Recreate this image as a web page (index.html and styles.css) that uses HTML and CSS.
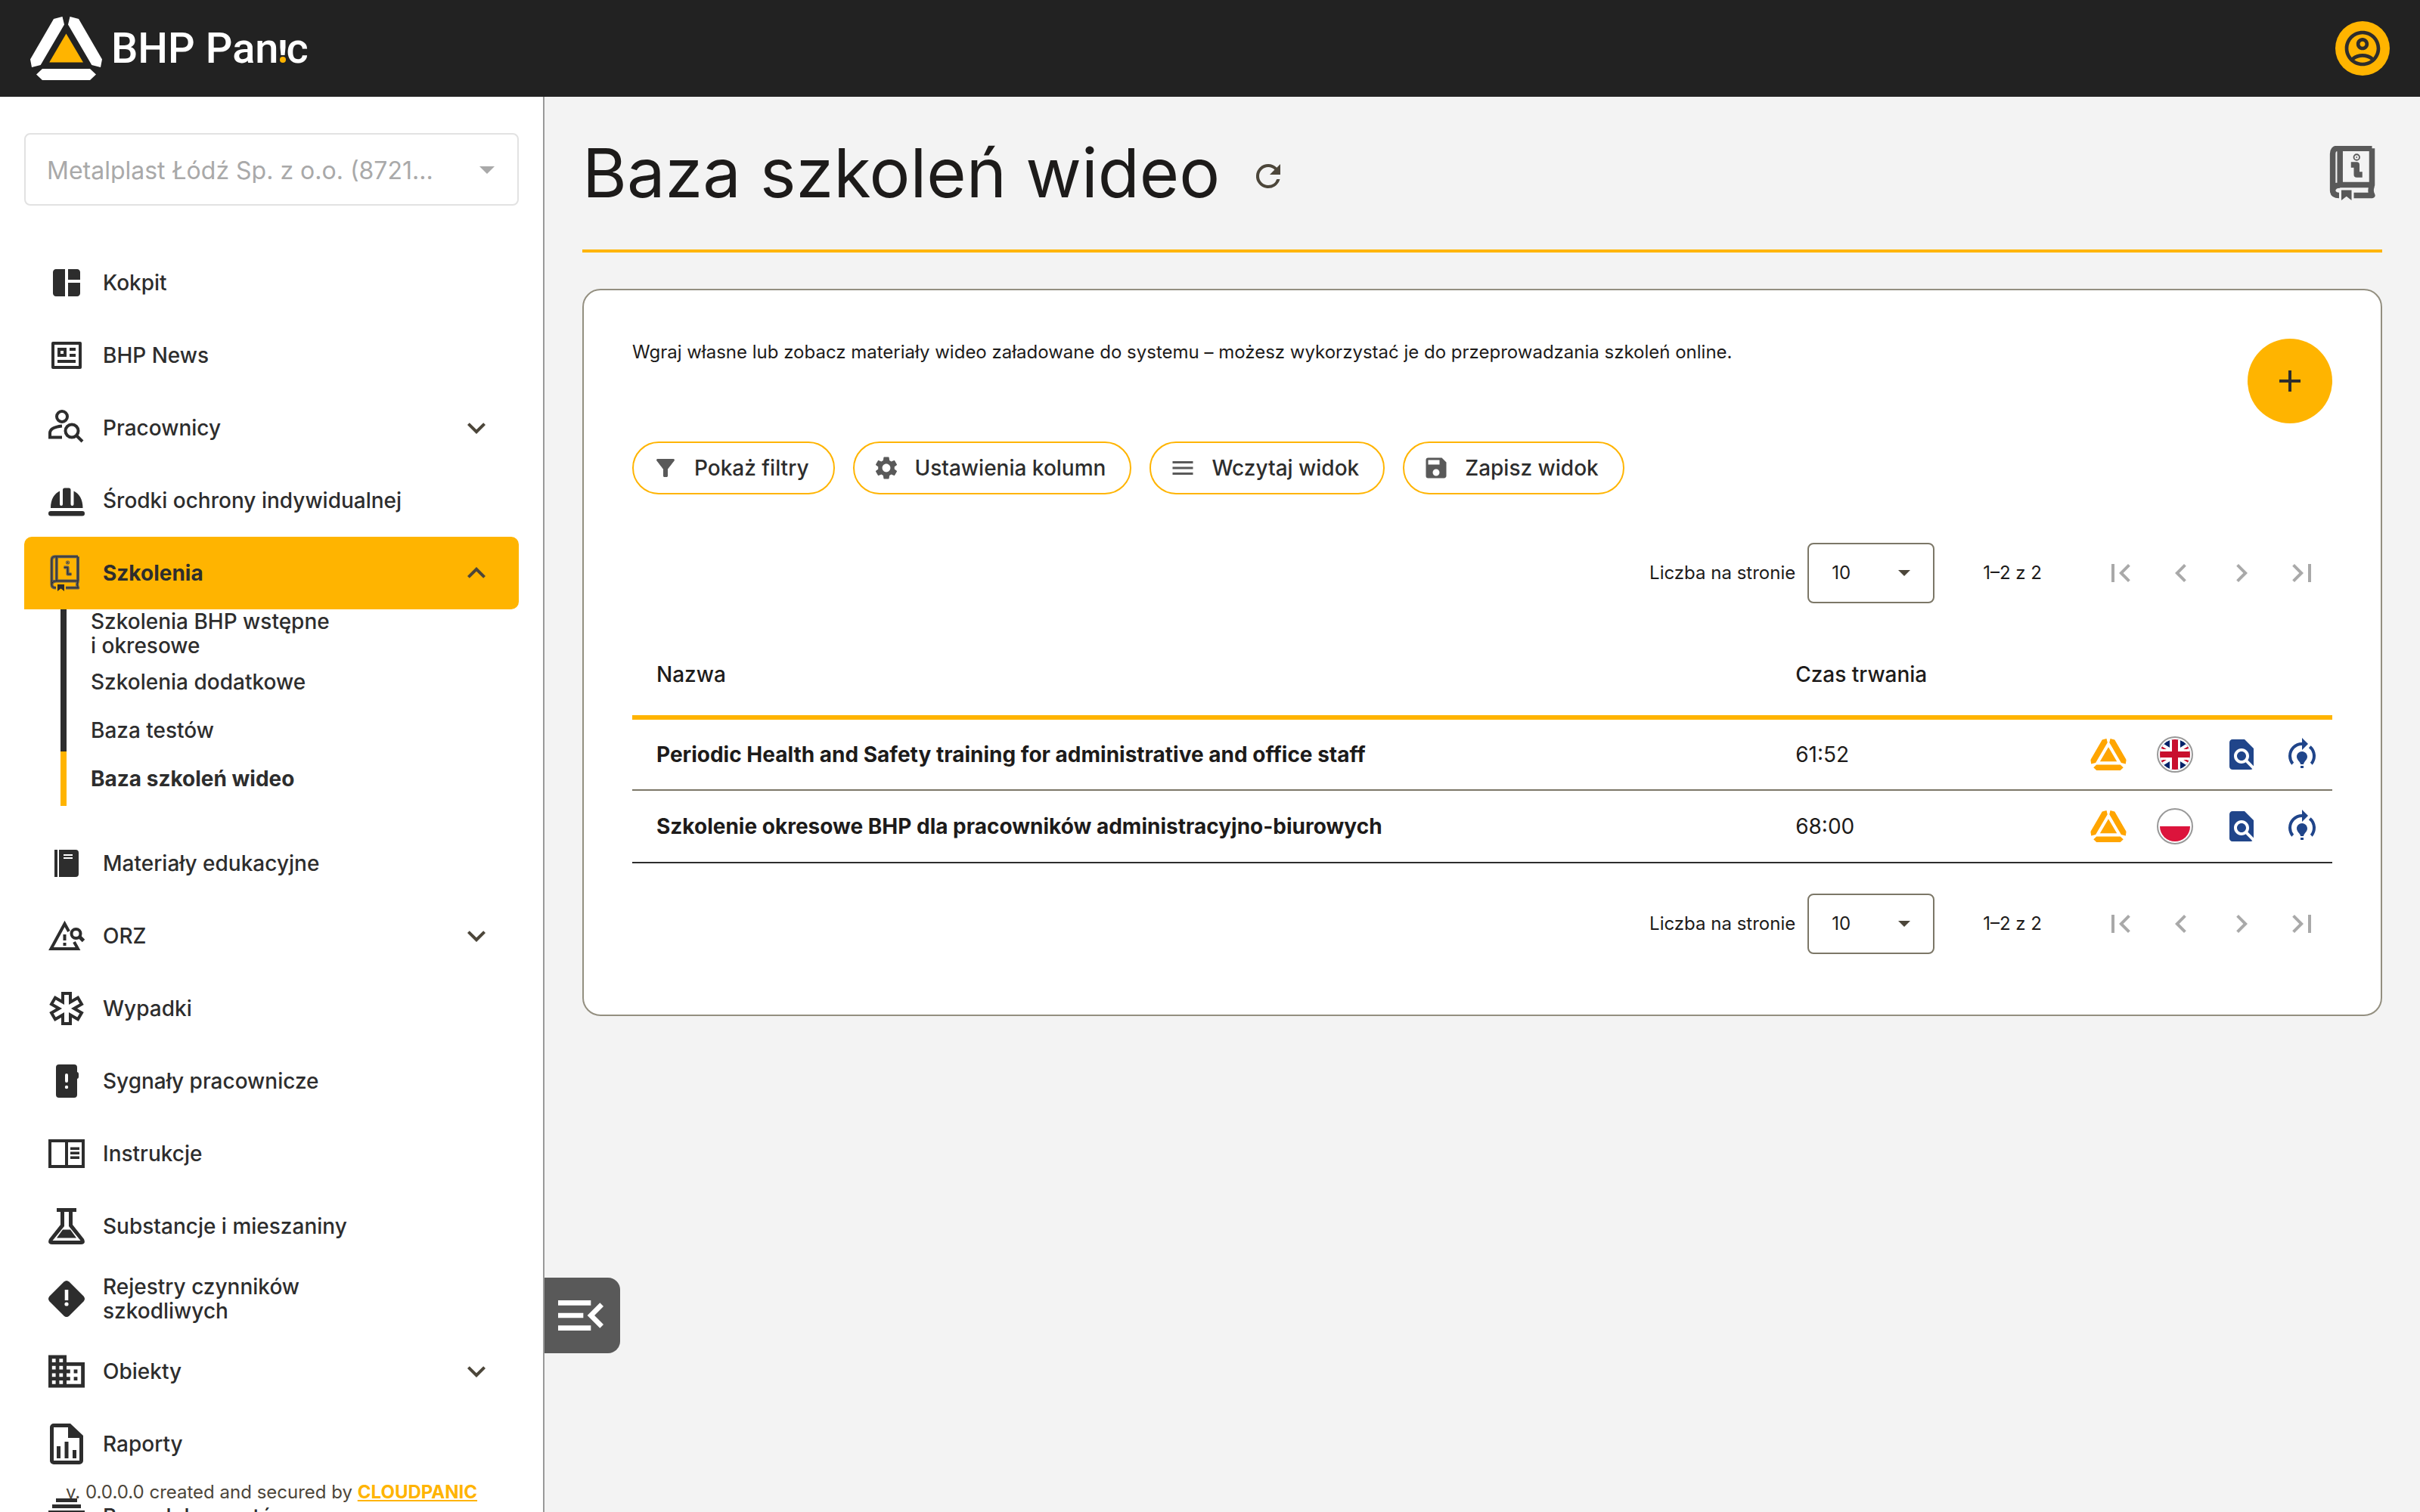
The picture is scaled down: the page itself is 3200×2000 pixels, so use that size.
FILE: index.html
```html
<!DOCTYPE html>
<html lang="pl">
<head>
<meta charset="utf-8">
<title>Baza szkoleń wideo</title>
<link rel="stylesheet" href="styles.css">
</head>
<body>
<!-- shared shapes -->
<svg class="sprite" aria-hidden="true">
  <symbol id="mark" viewBox="0 0 95 84">
    <path d="M31 3 42.500 0 45 10.600 13.700 64 2 67 0 56.600zM64 3 52.500 0 50 10.600 81.300 64 93 67 95 56.600zM8 76.500 16 69H79L87 76.500 79 84H16z"/>
  </symbol>
  <symbol id="mark-core" viewBox="0 0 95 84">
    <path d="M47.500 22.600 25.200 60.600H70z"/>
  </symbol>
  <symbol id="more" viewBox="0 0 24 24"><path d="M16.590 8.590 12 13.170 7.410 8.590 6 10l6 6 6-6z"/></symbol>
  <symbol id="less" viewBox="0 0 24 24"><path d="m12 8-6 6 1.410 1.410L12 10.830l4.590 4.580L18 14z"/></symbol>
  <symbol id="page-first" viewBox="0 0 24 24"><path d="M18.410 16.590 13.820 12l4.590-4.590L17 6l-6 6 6 6zM6 6h2v12H6z"/></symbol>
  <symbol id="page-prev" viewBox="0 0 24 24"><path d="M15.410 7.410 14 6l-6 6 6 6 1.410-1.410L10.830 12z"/></symbol>
  <symbol id="page-next" viewBox="0 0 24 24"><path d="M10 6 8.590 7.410 13.170 12l-4.580 4.590L10 18l6-6z"/></symbol>
  <symbol id="page-last" viewBox="0 0 24 24"><path d="M5.590 7.410 10.180 12l-4.590 4.590L7 18l6-6-6-6zM16 6h2v12h-2z"/></symbol>
  <symbol id="preview" viewBox="0 0 24 24"><path d="M20 19.590V8l-6-6H6c-1.100 0-1.990.9-1.990 2L4 20c0 1.100.89 2 1.990 2H18c.45 0 .85-.15 1.190-.4l-4.430-4.430c-.8.52-1.740.83-2.760.83-2.760 0-5-2.240-5-5s2.240-5 5-5 5 2.240 5 5c0 1.020-.31 1.960-.83 2.750L20 19.590zM9 13c0 1.660 1.340 3 3 3s3-1.340 3-3-1.340-3-3-3-3 1.340-3 3z"/></symbol>
  <symbol id="training" viewBox="0 0 24 24"><path d="M15.500 13.500c0 2-2.500 3.500-2.500 5h-2c0-1.500-2.500-3-2.500-5 0-1.930 1.570-3.500 3.500-3.500s3.500 1.570 3.500 3.500zm-2.500 6h-2V21h2v-1.500zM19 13c0 1.680-.59 3.210-1.580 4.420l1.420 1.420a8.978 8.978 0 0 0-1-12.680l-1.420 1.420A6.993 6.993 0 0 1 19 13zm-3-8-4-4v3a9 9 0 0 0-9 9c0 2.230.82 4.270 2.160 5.840l1.420-1.420A6.938 6.938 0 0 1 5 13c0-3.860 3.140-7 7-7v3l4-4z"/></symbol>
  <symbol id="book" viewBox="0 0 48 48">
    <path fill="none" stroke-linejoin="round" d="M39 2.200H8.500Q4.400 2.200 4.400 7V39Q4.400 43.600 10 43.600M10.800 2.200V34.400H39V2.200M4.400 39Q5 34.600 10.800 34.600M39 35Q37 39 39.200 43.600H23M20.500 16.600H25.500V25.400H30.500"/>
    <circle cx="25.500" cy="10" r=".6"/>
  </symbol>
</svg>

<header class="topbar">
  <a class="logo" href="#" aria-label="BHP Panic">
    <svg class="logo-mark" viewBox="0 0 95 84"><use href="#mark"/><use class="core" href="#mark-core"/></svg>
    <span class="logo-text">
      <span>BHP Pan</span>
      <svg viewBox="0 0 10 30"><path d="M1.500 0h7v10l-1 10h-5l-1-10z"/><circle class="core" cx="5" cy="26" r="4"/></svg>
      <span>c</span>
    </span>
  </a>
  <button class="profile" aria-label="Profil">
    <svg viewBox="0 0 24 24"><path d="M12 2C6.480 2 2 6.480 2 12s4.480 10 10 10 10-4.480 10-10S17.520 2 12 2zM7.350 18.500C8.660 17.560 10.260 17 12 17s3.340.56 4.650 1.500c-1.310.94-2.910 1.500-4.650 1.500s-3.340-.56-4.650-1.500zm10.790-1.380C16.450 15.800 14.320 15 12 15s-4.450.8-6.140 2.120A7.957 7.957 0 0 1 4 12c0-4.420 3.580-8 8-8s8 3.580 8 8c0 1.950-.7 3.730-1.860 5.120zM12 6c-1.930 0-3.500 1.570-3.500 3.500S10.070 13 12 13s3.500-1.570 3.500-3.500S13.930 6 12 6zm0 5c-.83 0-1.500-.67-1.500-1.500S11.170 8 12 8s1.500.67 1.500 1.500S12.830 11 12 11z"/></svg>
  </button>
</header>

<div class="layout">
  <aside class="sidebar">
    <div class="company">
      <select aria-label="Firma" disabled>
        <option>Metalplast Łódź Sp. z o.o. (8721...</option>
      </select>
    </div>

    <nav class="menu">
      <a class="item" href="#">
        <svg class="icon" viewBox="0 0 24 24"><path d="M11 21H5c-1.100 0-2-.9-2-2V5c0-1.100.9-2 2-2h6v18zm2 0h6c1.100 0 2-.9 2-2v-7h-8v9zm8-11V5c0-1.100-.9-2-2-2h-6v7h8z"/></svg>
        <span>Kokpit</span>
      </a>
      <a class="item" href="#">
        <svg class="icon" viewBox="0 0 24 24"><path fill-rule="evenodd" d="M3 3h18a1 1 0 0 1 1 1v16a1 1 0 0 1-1 1H3a1 1 0 0 1-1-1V4a1 1 0 0 1 1-1zm1 2v14h16V5zM6 7h6v6H6zm2 2v2h2V9zM14 7h4v2h-4zM14 11h4v2h-4zM6 15h12v2H6z"/></svg>
        <span>BHP News</span>
      </a>
      <a class="item" href="#">
        <svg class="icon line" viewBox="0 0 48 48"><g stroke-width="4"><circle cx="18" cy="9" r="7"/><circle cx="31" cy="28" r="8.500"/><path d="m37 34 8 8"/><path d="M18 21.500C8 22.500 2 25.500 2 31v5.500h16"/></g></svg>
        <span>Pracownicy</span>
        <svg class="chevron"><use href="#more"/></svg>
      </a>
      <a class="item" href="#">
        <svg class="icon" viewBox="0 0 48 48"><path d="M19 29a2 2 0 0 1-4 0V11.500C8 15 3 22 3 34h42.500c0-12-5-19-12-22.500V29a2 2 0 0 1-4 0V10a2.500 2.500 0 0 0-2.500-2.500h-5.500A2.500 2.500 0 0 0 19 10z"/><rect x="0" y="38" width="48" height="6.500" rx="3.200"/></svg>
        <span>Środki ochrony indywidualnej</span>
      </a>
      <a class="item active" href="#">
        <svg class="icon book"><use class="book-base" href="#book"/><use class="book-line" href="#book"/><svg viewBox="0 0 48 48"><path d="M12 39h9v9l-4.500-3.500L12 48z"/></svg></svg>
        <span>Szkolenia</span>
        <svg class="chevron"><use href="#less"/></svg>
      </a>
      <ul class="submenu">
        <li><a href="#">Szkolenia BHP wstępne<br>i okresowe</a></li>
        <li><a href="#">Szkolenia dodatkowe</a></li>
        <li><a href="#">Baza testów</a></li>
        <li class="current"><a href="#">Baza szkoleń wideo</a></li>
      </ul>
      <a class="item" href="#">
        <svg class="icon" viewBox="0 0 48 48"><path fill-rule="evenodd" d="M8 6h4v36H8zM14 6h22a4 4 0 0 1 4 4v28a4 4 0 0 1-4 4H14zm6 6v2h12v-2zm0 4v2h12v-2z"/></svg>
        <span>Materiały edukacyjne</span>
      </a>
      <a class="item" href="#">
        <svg class="icon line" viewBox="0 0 48 48"><path stroke-width="4" d="M27 18 21.500 8 3.500 41H39L34 32"/><path stroke-width="4" d="M21.500 22v8M21.500 33v4"/><circle stroke-width="4" cx="36.500" cy="21" r="6"/><path stroke-width="5" d="m41 25 5.500 5.500"/></svg>
        <span>ORZ</span>
        <svg class="chevron"><use href="#more"/></svg>
      </a>
      <a class="item" href="#">
        <svg class="icon line" viewBox="0 0 48 48"><path stroke-width="4" d="M19 4h10V15.500L39 9.700 44 18.300 34 24 44 29.700 39 38.300 29 32.500V44H19V32.500L9 38.300 4 29.700 14 24 4 18.300 9 9.700 19 15.500z"/></svg>
        <span>Wypadki</span>
      </a>
      <a class="item" href="#">
        <svg class="icon" viewBox="0 0 48 48"><path d="M14 2h20a4 4 0 0 1 4 4v6a2.500 2.500 0 0 1 2 2.500v4a2.500 2.500 0 0 1-2 2.500v21a4 4 0 0 1-4 4H14a4 4 0 0 1-4-4V6a4 4 0 0 1 4-4z"/><rect x="22" y="14" width="4" height="12" rx="2" fill="#fff"/><circle cx="24" cy="32" r="2.200" fill="#fff"/></svg>
        <span>Sygnały pracownicze</span>
      </a>
      <a class="item" href="#">
        <svg class="icon" viewBox="0 0 48 48"><path fill-rule="evenodd" d="M0 5h48v38H0zm4 4v30h18V9zm22 0v30h18V9z"/><path d="M29 15.500h12v3.500H29zM29 21.500h12V25H29zM29 27.500h12V31H29z"/></svg>
        <span>Instrukcje</span>
      </a>
      <a class="item" href="#">
        <svg class="icon" viewBox="0 0 48 48"><path fill-rule="evenodd" d="M11 0h26v5h-5v17l15 19q3 7-4 7H5q-7 0-4-7L16 22V5h-5zm10 5v19L5.500 43h37L27 24V5z"/><path d="M19 28.500h10l8 11H11z"/></svg>
        <span>Substancje i mieszaniny</span>
      </a>
      <a class="item" href="#">
        <svg class="icon" viewBox="0 0 48 48"><path d="M20.500 1.500q3.500-3 7 0l19 19q3 3.500 0 7l-19 19q-3.500 3-7 0l-19-19q-3-3.500 0-7z"/><path fill="#fff" d="M21.700 12h4.600v14h-4.600z"/><circle cx="24" cy="31" r="2.600" fill="#fff"/></svg>
        <span>Rejestry czynników<br>szkodliwych</span>
      </a>
      <a class="item" href="#">
        <svg class="icon" viewBox="2 2 20 20"><path d="M12 7V3H2v18h20V7H12zM6 19H4v-2h2v2zm0-4H4v-2h2v2zm0-4H4V9h2v2zm0-4H4V5h2v2zm4 12H8v-2h2v2zm0-4H8v-2h2v2zm0-4H8V9h2v2zm0-4H8V5h2v2zm10 12h-8v-2h2v-2h-2v-2h2v-2h-2V9h8v10zm-2-8h-2v2h2v-2zm0 4h-2v2h2v-2z"/></svg>
        <span>Obiekty</span>
        <svg class="chevron"><use href="#more"/></svg>
      </a>
      <a class="item" href="#">
        <svg class="icon tall" viewBox="0 0 48 54"><path fill-rule="evenodd" d="M7 0h22l17 16v33a5 5 0 0 1-5 5H7a5 5 0 0 1-5-5V5a5 5 0 0 1 5-5zm0 5v44h34V19H26V5z"/><path d="M11 30h5v16h-5zM21.500 24h5v22h-5zM32 35h5v11h-5z"/></svg>
        <span>Raporty</span>
      </a>
      <a class="item" href="#">
        <svg class="icon" viewBox="0 0 48 48"><path d="M10 0h28v5H10zM5 8h38v5H5zM0 16h48v30H0z"/></svg>
        <span>Baza dokumentów</span>
      </a>
    </nav>

    <p class="version">v. 0.0.0.0 created and secured by <a href="#">CLOUDPANIC</a></p>
  </aside>

  <button class="collapse" aria-label="Zwiń menu">
    <svg viewBox="0 0 24 24"><path d="M3 18h13v-2H3v2zM3 13h10v-2H3v2zM3 6v2h13V6H3zm18 9.590L17.420 12 21 8.410 19.590 7l-5 5 5 5L21 15.590z"/></svg>
  </button>

  <main class="content">
    <div class="page-head">
      <h1>Baza szkoleń wideo</h1>
      <button class="refresh" aria-label="Odśwież">
        <svg viewBox="0 0 24 24"><path d="M17.650 6.350A7.958 7.958 0 0 0 12 4a8 8 0 1 0 7.730 10h-2.080A5.990 5.990 0 0 1 12 18c-3.310 0-6-2.690-6-6s2.690-6 6-6c1.660 0 3.140.69 4.220 1.780L13 11h7V4l-2.350 2.350z"/></svg>
      </button>
      <svg class="page-icon book"><use class="book-base" href="#book"/><svg viewBox="0 0 48 48"><path d="M12 39h9v9l-4.500-3.500L12 48z"/></svg></svg>
    </div>

    <section class="card">
      <div class="intro">
        <p>Wgraj własne lub zobacz materiały wideo załadowane do systemu – możesz wykorzystać je do przeprowadzania szkoleń online.</p>
        <button class="fab" aria-label="Dodaj"><svg viewBox="0 0 24 24"><path d="M19 13h-6v6h-2v-6H5v-2h6V5h2v6h6z"/></svg></button>
      </div>

      <div class="actions">
        <button class="pill"><svg viewBox="0 0 24 24"><path d="M4.250 5.610C6.270 8.200 10 13 10 13v6c0 .55.45 1 1 1h2c.55 0 1-.45 1-1v-6s3.720-4.800 5.740-7.390A.998.998 0 0 0 18.950 4H5.040c-.83 0-1.300.95-.79 1.610z"/></svg>Pokaż filtry</button>
        <button class="pill"><svg viewBox="0 0 24 24"><path d="M19.140 12.940c.04-.3.06-.61.06-.94 0-.32-.02-.64-.07-.94l2.030-1.580a.49.49 0 0 0 .12-.61l-1.920-3.320a.488.488 0 0 0-.59-.22l-2.390.96c-.5-.38-1.030-.7-1.620-.94l-.36-2.540a.484.484 0 0 0-.48-.41h-3.840c-.24 0-.43.17-.47.41l-.36 2.540c-.59.24-1.130.57-1.620.94l-2.390-.96c-.22-.08-.47 0-.59.22L2.740 8.870c-.12.21-.08.47.12.61l2.030 1.580c-.05.3-.09.63-.09.94s.02.64.07.94l-2.030 1.580a.49.49 0 0 0-.12.61l1.920 3.320c.12.22.37.29.59.22l2.390-.96c.5.38 1.030.7 1.620.94l.36 2.540c.05.24.24.41.48.41h3.840c.24 0 .44-.17.47-.41l.36-2.540c.59-.24 1.130-.56 1.620-.94l2.390.96c.22.08.47 0 .59-.22l1.920-3.320c.12-.22.07-.47-.12-.61l-2.010-1.580zM12 15.600c-1.980 0-3.600-1.620-3.600-3.600s1.620-3.600 3.600-3.600 3.600 1.620 3.600 3.600-1.620 3.600-3.600 3.600z"/></svg>Ustawienia kolumn</button>
        <button class="pill"><svg viewBox="0 0 24 24"><path d="M3 18h18v-2H3v2zm0-5h18v-2H3v2zm0-7v2h18V6H3z"/></svg>Wczytaj widok</button>
        <button class="pill"><svg viewBox="0 0 24 24"><path d="M17 3H5a2 2 0 0 0-2 2v14a2 2 0 0 0 2 2h14c1.100 0 2-.9 2-2V7l-4-4zm-5 16c-1.660 0-3-1.340-3-3s1.340-3 3-3 3 1.340 3 3-1.340 3-3 3zm3-10H5V5h10v4z"/></svg>Zapisz widok</button>
      </div>

      <div class="pager">
        <label for="size-top">Liczba na stronie</label>
        <span class="size"><select id="size-top"><option>10</option></select></span>
        <span class="range">1–2 z 2</span>
        <button aria-label="Pierwsza strona" disabled><svg><use href="#page-first"/></svg></button>
        <button aria-label="Poprzednia strona" disabled><svg><use href="#page-prev"/></svg></button>
        <button aria-label="Następna strona" disabled><svg><use href="#page-next"/></svg></button>
        <button aria-label="Ostatnia strona" disabled><svg><use href="#page-last"/></svg></button>
      </div>

      <table class="videos">
        <thead>
          <tr><th class="col-name">Nazwa</th><th>Czas trwania</th><th></th></tr>
        </thead>
        <tbody>
          <tr>
            <td class="name">Periodic Health and Safety training for administrative and office staff</td>
            <td>61:52</td>
            <td>
              <div class="row-actions">
                <svg class="mark" viewBox="0 0 95 84"><use href="#mark"/><use href="#mark-core"/></svg>
                <svg class="flag" viewBox="0 0 48 48">
                  <defs><clipPath id="round"><circle cx="24" cy="24" r="20"/></clipPath></defs>
                  <circle class="ring" cx="24" cy="24" r="23"/>
                  <g clip-path="url(#round)">
                    <path fill="#012169" d="M0 0h48v48H0z"/>
                    <path stroke="#fff" stroke-width="8" d="M-8 4 56 44M56 4-8 44"/>
                    <path stroke="#c8102e" stroke-width="2.600" d="M-8 5.500 24 25.500M56 5.500 24 25.500M-8 42.500 24 22.500M56 42.500 24 22.500"/>
                    <path stroke="#fff" stroke-width="14" d="M24 0v48M0 24h48"/>
                    <path stroke="#c8102e" stroke-width="8" d="M24 0v48M0 24h48"/>
                  </g>
                </svg>
                <button aria-label="Podgląd"><svg><use href="#preview"/></svg></button>
                <button aria-label="Szkolenie"><svg><use href="#training"/></svg></button>
              </div>
            </td>
          </tr>
          <tr>
            <td class="name">Szkolenie okresowe BHP dla pracowników administracyjno-biurowych</td>
            <td>68:00</td>
            <td>
              <div class="row-actions">
                <svg class="mark" viewBox="0 0 95 84"><use href="#mark"/><use href="#mark-core"/></svg>
                <svg class="flag" viewBox="0 0 48 48">
                  <circle class="ring" cx="24" cy="24" r="23"/>
                  <path fill="#dc143c" d="M4 24h40a20 20 0 0 1-40 0z"/>
                </svg>
                <button aria-label="Podgląd"><svg><use href="#preview"/></svg></button>
                <button aria-label="Szkolenie"><svg><use href="#training"/></svg></button>
              </div>
            </td>
          </tr>
        </tbody>
      </table>

      <div class="pager pager-bottom">
        <label for="size-bottom">Liczba na stronie</label>
        <span class="size"><select id="size-bottom"><option>10</option></select></span>
        <span class="range">1–2 z 2</span>
        <button aria-label="Pierwsza strona" disabled><svg><use href="#page-first"/></svg></button>
        <button aria-label="Poprzednia strona" disabled><svg><use href="#page-prev"/></svg></button>
        <button aria-label="Następna strona" disabled><svg><use href="#page-next"/></svg></button>
        <button aria-label="Ostatnia strona" disabled><svg><use href="#page-last"/></svg></button>
      </div>
    </section>
  </main>
</div>
</body>
</html>
```
FILE: styles.css
```css
:root {
  --accent: #ffb400;
  --ink: #1d1b1a;
  --nav-ink: #2d2d2d;
  --grey: #595959;
  --blue: #20458a;
}

* {
  box-sizing: border-box;
}

body {
  margin: 0;
  height: 100vh;
  display: flex;
  flex-direction: column;
  background: #f3f3f3;
  color: var(--ink);
  font-family: Inter, sans-serif;
  font-size: 28px;
  line-height: 32px;
}

button {
  display: flex;
  align-items: center;
  justify-content: center;
  padding: 0;
  border: 0;
  background: none;
  color: inherit;
  font: inherit;
}

select {
  appearance: none;
  width: 100%;
  background: none;
  font: inherit;
}

svg {
  display: block;
  fill: currentColor;
  flex: none;
}

.sprite {
  position: absolute;
  width: 0;
  height: 0;
}

/* top bar */
.topbar {
  flex: none;
  display: flex;
  align-items: center;
  justify-content: space-between;
  height: 128px;
  padding: 0 40px;
  background: #222;
}

.logo {
  display: flex;
  align-items: center;
  gap: 12px;
  color: #fff;
  text-decoration: none;
}

.logo-mark {
  width: 95px;
  height: 84px;
}

.logo .core {
  fill: var(--accent);
}

.logo-text {
  display: flex;
  align-items: baseline;
  font-family: Roboto, sans-serif;
  font-size: 56px;
  font-weight: 500;
  line-height: 64px;
}

.logo-text svg {
  width: 10px;
  height: 30px;
}

.profile {
  width: 72px;
  height: 72px;
  border-radius: 50%;
  background: var(--accent);
  color: var(--nav-ink);
}

.profile svg {
  width: 56px;
  height: 56px;
}

.layout {
  flex: 1;
  min-height: 0;
  display: flex;
  position: relative;
}

/* sidebar */
.sidebar {
  flex: none;
  width: 720px;
  padding: 48px 32px 0;
  overflow: hidden;
  position: relative;
  background: #fff;
  border-right: 2px solid #999;
}

.company {
  position: relative;
  color: #a9a9a9;
  font-size: 32px;
}

.company select {
  height: 96px;
  padding: 4px 60px 0 28px;
  border: 2px solid #e2e2e2;
  border-radius: 8px;
  color: inherit;
  opacity: 1;
}

.company::after,
.size::after {
  content: "";
  position: absolute;
  right: 32px;
  top: 50%;
  margin-top: -4px;
  border: 10px solid transparent;
  border-top-color: currentColor;
  border-bottom: 0;
}

.menu {
  margin-top: 54px;
}

.item {
  display: flex;
  align-items: center;
  gap: 24px;
  height: 96px;
  padding: 0 32px;
  color: var(--nav-ink);
  font-weight: 500;
  text-decoration: none;
}

.icon {
  width: 48px;
  height: 48px;
}

.icon.tall {
  height: 54px;
}

.icon.line {
  fill: none;
  stroke: currentColor;
}

.chevron {
  width: 48px;
  height: 48px;
  margin-left: auto;
  color: #4c463a;
}

.item.active {
  border-radius: 10px 10px 10px 0;
  background: var(--accent);
  font-weight: 700;
}

/* grey stroke, in the menu with a thin dark one running inside it */
.book-base {
  fill: var(--grey);
  stroke: var(--grey);
  stroke-width: 5px;
}

.item .book-base {
  stroke-width: 4px;
}

.book-line {
  fill: var(--nav-ink);
  stroke: var(--nav-ink);
  stroke-width: 1px;
}

.submenu {
  margin: 0 0 28px 48px;
  padding: 0;
  list-style: none;
  border-left: 8px solid var(--nav-ink);
}

.submenu li {
  display: flex;
  align-items: center;
  height: 64px;
  padding-left: 32px;
}

.submenu a {
  color: var(--nav-ink);
  font-weight: 500;
  text-decoration: none;
}

.submenu .current {
  height: 72px;
  margin: -4px 0 0 -8px;
  border-left: 8px solid var(--accent);
}

.submenu .current a {
  font-weight: 700;
}

.version {
  position: absolute;
  left: 0;
  right: 0;
  bottom: 0;
  margin: 0;
  padding-bottom: 10px;
  color: #4c463a;
  font-size: 24px;
  text-align: center;
}

.version a {
  color: var(--accent);
  font-weight: 700;
}

.collapse {
  position: absolute;
  left: 720px;
  bottom: 210px;
  width: 100px;
  height: 100px;
  padding-right: 4px;
  border-radius: 0 16px 16px 0;
  background: var(--grey);
  color: #fff;
}

.collapse svg {
  width: 80px;
  height: 80px;
}

/* content */
.content {
  flex: 1;
  min-width: 0;
  padding: 0 50px;
}

.page-head {
  display: flex;
  align-items: center;
  height: 206px;
  border-bottom: 4px solid var(--accent);
}

h1 {
  margin: 0;
  font-size: 90px;
  font-weight: 400;
  line-height: 104px;
}

.refresh {
  width: 80px;
  height: 80px;
  margin: 8px 0 0 24px;
  color: #4c463a;
}

.refresh svg {
  width: 48px;
  height: 48px;
}

.page-icon {
  width: 72px;
  height: 72px;
  margin-left: auto;
  color: var(--grey);
}

.card {
  margin-top: 48px;
  padding: 64px 64px 80px;
  background: #fff;
  border: 2px solid #938f80;
  border-radius: 24px;
}

.intro {
  display: flex;
  justify-content: space-between;
  font-size: 24px;
}

.intro p {
  margin: 2px 0 0;
}

.fab {
  flex: none;
  width: 112px;
  height: 112px;
  border-radius: 50%;
  background: var(--accent);
  color: var(--nav-ink);
}

.fab svg {
  width: 48px;
  height: 48px;
}

.actions {
  display: flex;
  gap: 24px;
  margin-top: 24px;
}

.pill {
  gap: 20px;
  height: 70px;
  padding: 0 32px 0 24px;
  border: 2px solid var(--accent);
  border-radius: 35px;
  color: var(--nav-ink);
  font-weight: 500;
}

.pill svg {
  width: 36px;
  height: 36px;
  color: var(--grey);
}

.pager {
  display: flex;
  align-items: center;
  justify-content: flex-end;
  margin-top: 64px;
  font-size: 24px;
}

.pager-bottom {
  margin-top: 40px;
}

.size {
  position: relative;
  width: 168px;
  margin-left: 16px;
  color: #4c463a;
}

.size::after {
  border-width: 8px 8px 0;
}

.size select {
  display: block;
  height: 80px;
  padding: 0 30px;
  border: 2px solid #7c7767;
  border-radius: 8px;
  color: var(--ink);
}

.range {
  margin: 0 64px;
}

.pager button {
  width: 80px;
  height: 80px;
  color: #a9a9a9;
}

.pager button svg,
.row-actions button svg {
  width: 48px;
  height: 48px;
}

.videos {
  width: 100%;
  margin-top: 40px;
  border-collapse: separate;
  border-spacing: 0;
}

.videos th {
  height: 114px;
  padding: 0 32px;
  border-bottom: 6px solid var(--accent);
  font-weight: 500;
  text-align: left;
}

.videos td {
  height: 94px;
  padding: 0 32px;
  border-bottom: 2px solid #7c7767;
}

.videos tr:last-child td {
  height: 96px;
  border-bottom-color: var(--nav-ink);
}

.videos td:last-child {
  padding: 0;
}

.col-name {
  width: 67%;
}

.videos .name {
  font-weight: 700;
}

.row-actions {
  display: flex;
  align-items: center;
  justify-content: flex-end;
}

.row-actions .mark {
  width: 48px;
  height: 42px;
  margin-right: 40px;
  color: #ffa500;
}

.row-actions .flag {
  width: 48px;
  height: 48px;
  margin-right: 24px;
}

.ring {
  fill: #fff;
  stroke: #999;
  stroke-width: 2px;
}

.row-actions button {
  width: 80px;
  height: 80px;
  color: var(--blue);
}
```
